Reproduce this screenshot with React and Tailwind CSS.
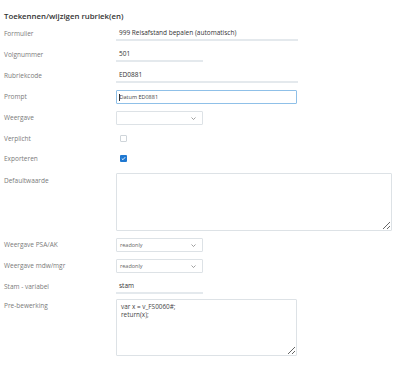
import React from "react";

const Label = ({ children, className = "" }) => (
  <div className={"w-[112px] shrink-0 text-[6.5px] text-[#7a7a7a] " + className}>{children}</div>
);

const Chevron = () => (
  <svg width="5" height="3" viewBox="0 0 5 3" className="absolute right-[6px] top-[5px]">
    <path d="M0.5 0.5 L2.5 2.5 L4.5 0.5" fill="none" stroke="#777" strokeWidth="0.7" />
  </svg>
);

const Select = ({ value }) => (
  <div className="relative w-[87px] h-[14px] border border-[#dde2e6] rounded-[1px] bg-white flex items-center pl-[3px] text-[5.5px] text-[#666]">
    {value}
    <Chevron />
  </div>
);

export default function App() {
  return (
    <div className="w-[400px] h-[365px] bg-white pl-[4px] pt-[10px] font-['Open_Sans',sans-serif] overflow-hidden">
      <div className="text-[7.8px] font-semibold text-[#333] leading-[12px]">Toekennen/wijzigen rubriek(en)</div>
      <div className="flex flex-col gap-[7px] mt-[5px]">
        <div className="flex items-center h-[14px]">
          <Label>Formulier</Label>
          <div className="w-[182px] h-[14px] border-b-2 border-[#e4e9ed] flex items-center pl-[3px] text-[6.5px] text-[#333]">999 Reisafstand bepalen (automatisch)</div>
        </div>
        <div className="flex items-center h-[14px]">
          <Label>Volgnummer</Label>
          <div className="w-[87px] h-[14px] border-b-2 border-[#e4e9ed] flex items-center pl-[3px] text-[6.5px] text-[#333]">501</div>
        </div>
        <div className="flex items-center h-[14px]">
          <Label>Rubriekcode</Label>
          <div className="w-[182px] h-[14px] border-b-2 border-[#e4e9ed] flex items-center pl-[3px] text-[6.5px] text-[#333]">ED0881</div>
        </div>
        <div className="flex items-center h-[14px]">
          <Label>Prompt</Label>
          <div className="w-[181px] h-[14px] border border-[#8fc0e8] rounded-[1px] flex items-center pl-[2px] text-[5.5px] text-[#444]">
            <span className="w-[0.5px] h-[7px] bg-[#333]" />
            Datum ED0881
          </div>
        </div>
        <div className="flex items-center h-[14px]">
          <Label>Weergave</Label>
          <Select value="" />
        </div>
        <div className="flex items-center h-[13px]">
          <Label>Verplicht</Label>
          <div className="ml-[4px] w-[7px] h-[7px] border border-[#cfd5da] rounded-[1px] bg-white" />
        </div>
        <div className="flex items-center h-[13px]">
          <Label>Exporteren</Label>
          <div className="ml-[4px] w-[7px] h-[7px] rounded-[1px] bg-[#1f78d1] flex items-center justify-center">
            <svg width="5" height="5" viewBox="0 0 5 5">
              <path d="M0.8 2.6 L2 3.7 L4.2 1.2" fill="none" stroke="white" strokeWidth="0.9" />
            </svg>
          </div>
        </div>
        <div className="flex items-start h-[58px] mt-[1px]">
          <Label className="pt-[3px]">Defaultwaarde</Label>
          <textarea className="w-[276px] h-[58px] border border-[#dde2e6] rounded-[1px] outline-none" defaultValue="" />
        </div>
        <div className="flex items-center h-[14px]">
          <Label>Weergave PSA/AK</Label>
          <Select value="readonly" />
        </div>
        <div className="flex items-center h-[14px]">
          <Label>Weergave mdw/mgr</Label>
          <Select value="readonly" />
        </div>
        <div className="flex items-center h-[14px]">
          <Label>Stam - variabel</Label>
          <div className="w-[87px] h-[14px] border-b-2 border-[#e4e9ed] flex items-center pl-[3px] text-[6.5px] text-[#333]">stam</div>
        </div>
        <div className="flex items-start h-[58px] mt-[-2px]">
          <Label className="pt-[2px]">Pre-bewerking</Label>
          <textarea
            className="w-[181px] h-[57px] border border-[#dde2e6] rounded-[1px] outline-none px-[4px] py-[3px] text-[6.4px] leading-[8px] text-[#444] resize-y font-['Open_Sans',sans-serif]"
            defaultValue={"var x = v_FS0060#;\nreturn(x);"}
          />
        </div>
      </div>
    </div>
  );
}
